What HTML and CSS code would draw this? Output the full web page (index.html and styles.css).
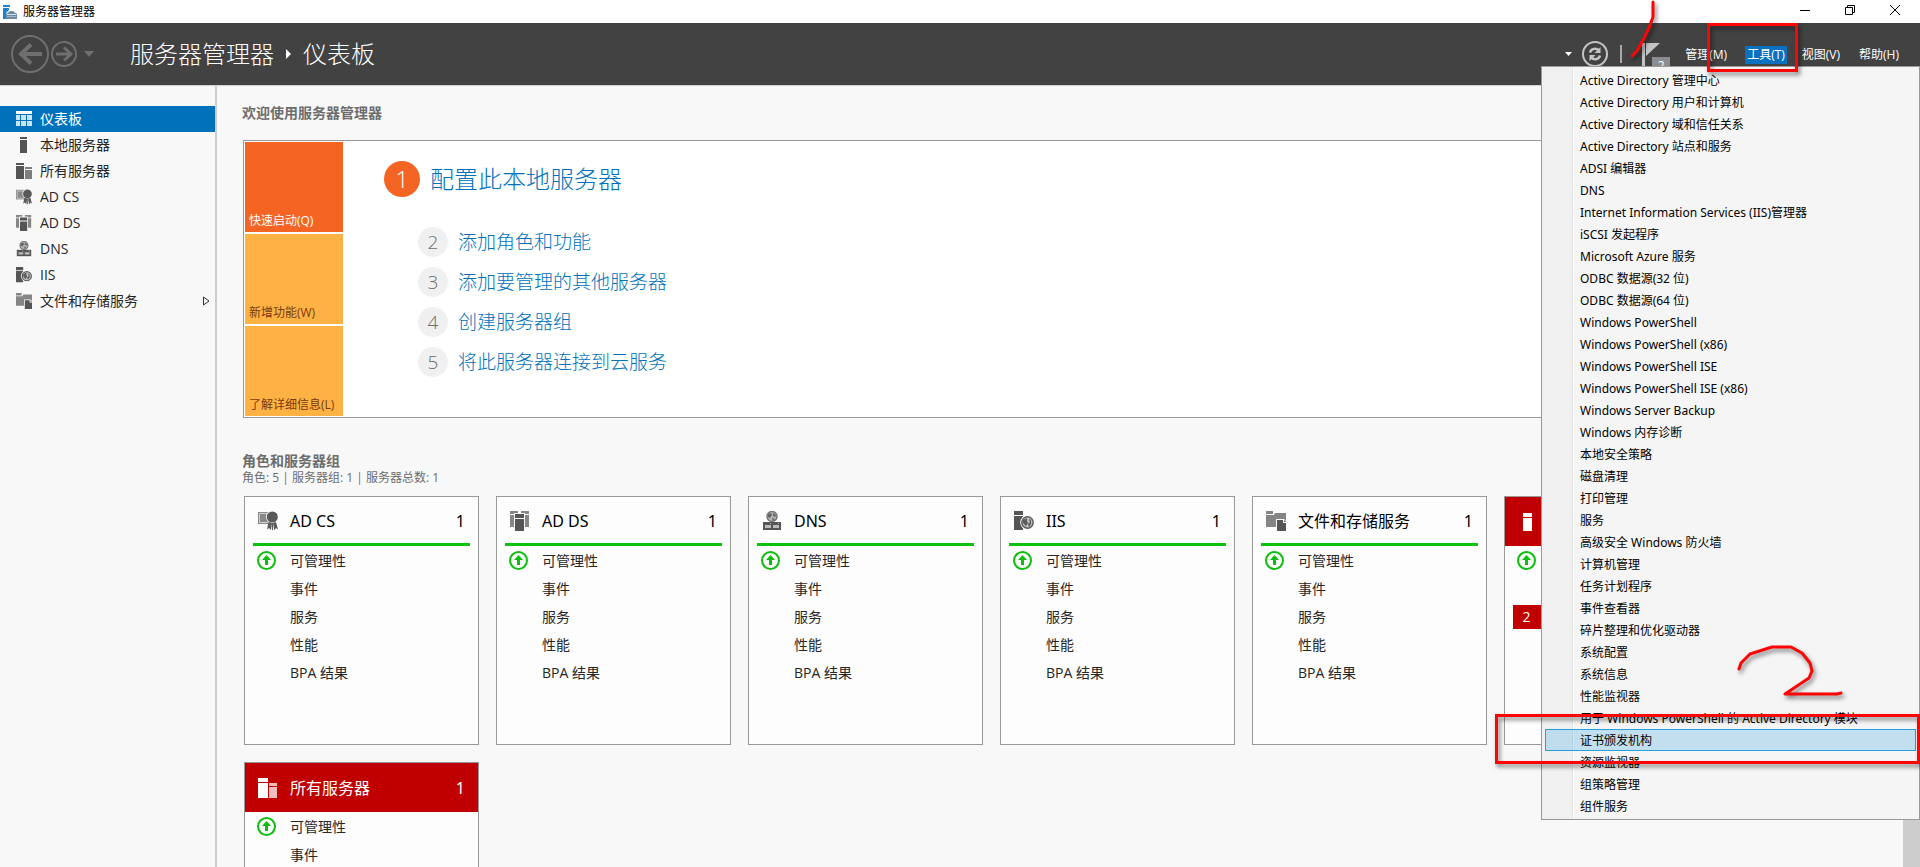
FILE: index.html
```html
<!DOCTYPE html>
<html lang="zh-CN">
<head>
<meta charset="utf-8">
<title>服务器管理器</title>
<link rel="stylesheet" href="styles.css">
</head>
<body>
<svg class="sprite" aria-hidden="true">
  <symbol id="i-dash" viewBox="0 0 16 16"><path fill="#fff" d="M0 0h16v3H0z"/><path fill="#cce3f2" d="M0 4h4v5H0zM5 4h5v5H5zM11 4h5v5h-5zM0 10h4v5H0zM5 10h5v5H5zM11 10h5v5h-5z"/></symbol>
  <symbol id="i-local" viewBox="0 0 16 16"><path fill="currentColor" d="M4 0h7v2H4zM4 3h7v13H4z"/></symbol>
  <symbol id="i-all" viewBox="0 0 16 16"><path fill="currentColor" d="M0 0h8v2H0zM0 3h8v13H0z"/><path fill="currentColor" opacity=".75" d="M9 4h7v2H9zM9 7h7v9H9z"/></symbol>
  <symbol id="i-local-lg" viewBox="0 0 20 20"><path fill="currentColor" d="M5 1h9v4H5zM5 6h9v13H5z"/></symbol>
  <symbol id="i-all-lg" viewBox="0 0 20 20"><path fill="currentColor" d="M0 0h10v4H0zM0 5h10v15H0z"/><path fill="currentColor" opacity=".75" d="M11 5h8v3h-8zM11 9h8v11h-8z"/></symbol>
  <symbol id="i-cs" viewBox="0 0 20 20"><path fill="#8a8a8a" d="M0 1h11v12H0z"/><path fill="none" stroke="#d0d0d0" d="M1.500 2.500h10v9h-10z"/><circle cx="14.300" cy="6" r="6.300" fill="#fafafa"/><circle cx="14.300" cy="6" r="5.500" fill="#595959"/><path fill="#595959" d="m10.500 11 3.500 1-1 7-2-2-2 1.500zM15 12l3-1 2 7.500-2-1.500-1.700 2.500zM14 12h1v7h-1z"/></symbol>
  <symbol id="i-ds" viewBox="0 0 20 20"><path fill="#868686" d="M0 0h8v3H0zM0 4h4v12H0zM11 0h8v3h-8zM15 4h4v12h-4z"/><path fill="#f9f9f9" d="M4 2h11v18H4z"/><path fill="#555" d="M5 3h9v4H5zM5 8h9v12H5z"/></symbol>
  <symbol id="i-dns" viewBox="0 0 20 20"><circle cx="10" cy="5.500" r="5" fill="#b5b5b5" stroke="#777" stroke-width="1.500"/><path fill="#666" d="m6 3 3-1 1 2-2 3-2-1zM11 2l3 2-1 2-2-1zM10 7l3 1-2 2z"/><path fill="#555" d="M1 11h18v8H1z"/><path fill="#bbb" d="M3 14h6v3H3zM11 14h6v3h-6zM8 12h1v1H8zM16 12h1v1h-1z"/></symbol>
  <symbol id="i-iis" viewBox="0 0 20 20"><path fill="#555" d="M0 0h9v4H0zM0 5h9v14H0z"/><circle cx="13.500" cy="11.500" r="7.300" fill="#fafafa"/><circle cx="13.500" cy="11.500" r="5.700" fill="#bdbdbd" stroke="#5c5c5c" stroke-width="1.500"/><path fill="#5c5c5c" d="m9 9 4-2v3l1 2-2 3-3-3zM15 8l2 1v4l-2 3-1-3 2-2z"/></symbol>
  <symbol id="i-file" viewBox="0 0 20 20"><path fill="#858585" d="M0 0h7v3H0zM0 4h8l1-2h11v14H0z"/><path fill="#fafafa" d="M10 8h8l2 2v10H10z"/><path fill="#555" d="M11 9h6v3h3v8h-9zM18 9l2 2h-2z"/></symbol>
  <symbol id="i-up" viewBox="0 0 19 19"><circle cx="9.500" cy="9.500" r="8.500" fill="none" stroke="#0fbd0f" stroke-width="2"/><path fill="#0fbd0f" d="M9.500 4 14 9h-3v5H8V9H5z"/></symbol>
</svg>

<header class="titlebar">
  <svg class="app-icon" viewBox="0 0 14 14"><path fill="#1c82cf" d="M0 0h7v2H0zM0 3h6v2L3 8v6H0z"/><path fill="none" stroke="#7895aa" d="M6.500 8V6.500h4V8"/><path fill="#6a8ca5" d="m3 9 3-2h5l3 2v5H3z"/><path fill="#d7e2ea" d="M4 9h9v1H4zM4 11h9v.500H4z"/></svg>
  <span class="window-title">服务器管理器</span>
  <div class="window-buttons">
    <button aria-label="最小化"><svg viewBox="0 0 10 10"><path d="M0 5.500h10"/></svg></button>
    <button aria-label="还原"><svg viewBox="0 0 10 10"><path d="M.500 2.500h7v7h-7zM2.500 2V.500h7v7H8"/></svg></button>
    <button aria-label="关闭"><svg viewBox="0 0 10 10"><path d="m0 0 10 10M10 0 0 10"/></svg></button>
  </div>
</header>

<div class="banner">
  <div class="history">
    <button class="back" aria-label="后退"><svg viewBox="0 0 38 38"><circle cx="19" cy="19" r="18" stroke-width="2"/><path stroke-width="4" d="M31 19H9M20 9.500 10 19l10 9.500"/></svg></button>
    <button class="forward" aria-label="前进"><svg viewBox="0 0 26 26"><circle cx="13" cy="13" r="12" stroke-width="2"/><path stroke-width="3" d="M5 13h14M13 6.500l7 6.500-7 6.500"/></svg></button>
    <button class="recent" aria-label="历史记录"><svg viewBox="0 0 10 6"><path class="solid" d="M0 0h10L5 6z"/></svg></button>
  </div>
  <div class="crumbs"><span>服务器管理器</span><svg class="crumb-arrow" viewBox="0 0 5 10"><path fill="#fff" d="m0 0 5 5-5 5z"/></svg><span>仪表板</span></div>
  <div class="tools">
    <svg class="caret" viewBox="0 0 8 4"><path fill="#fff" d="M0 0h7L3.500 4z"/></svg>
    <button class="refresh" aria-label="刷新"><svg viewBox="0 0 26 26"><circle cx="13" cy="13" r="12" stroke-width="2"/><path stroke-width="2.500" d="M8 11.500c1-4 6-5 9-2M18 14.500c-1 4-6 5-9 2"/><path class="solid" d="M18.500 6v6h-6zM7.500 20v-6h6z"/></svg></button>
    <span class="divider"></span>
    <button class="flag" aria-label="通知 2"><svg viewBox="0 0 18 23"><path fill="#c4c4c4" d="M0 0h3v23H0zM4 0h14L4 13z"/></svg><span class="flag-count">2</span></button>
  </div>
  <nav class="menubar">
    <button>管理(M)</button><button class="open">工具(T)</button><button>视图(V)</button><button>帮助(H)</button>
  </nav>
  <div class="dropdown" role="menu">
    <button role="menuitem">Active Directory 管理中心</button>
    <button role="menuitem">Active Directory 用户和计算机</button>
    <button role="menuitem">Active Directory 域和信任关系</button>
    <button role="menuitem">Active Directory 站点和服务</button>
    <button role="menuitem">ADSI 编辑器</button>
    <button role="menuitem">DNS</button>
    <button role="menuitem">Internet Information Services (IIS)管理器</button>
    <button role="menuitem">iSCSI 发起程序</button>
    <button role="menuitem">Microsoft Azure 服务</button>
    <button role="menuitem">ODBC 数据源(32 位)</button>
    <button role="menuitem">ODBC 数据源(64 位)</button>
    <button role="menuitem">Windows PowerShell</button>
    <button role="menuitem">Windows PowerShell (x86)</button>
    <button role="menuitem">Windows PowerShell ISE</button>
    <button role="menuitem">Windows PowerShell ISE (x86)</button>
    <button role="menuitem">Windows Server Backup</button>
    <button role="menuitem">Windows 内存诊断</button>
    <button role="menuitem">本地安全策略</button>
    <button role="menuitem">磁盘清理</button>
    <button role="menuitem">打印管理</button>
    <button role="menuitem">服务</button>
    <button role="menuitem">高级安全 Windows 防火墙</button>
    <button role="menuitem">计算机管理</button>
    <button role="menuitem">任务计划程序</button>
    <button role="menuitem">事件查看器</button>
    <button role="menuitem">碎片整理和优化驱动器</button>
    <button role="menuitem">系统配置</button>
    <button role="menuitem">系统信息</button>
    <button role="menuitem">性能监视器</button>
    <button role="menuitem">用于 Windows PowerShell 的 Active Directory 模块</button>
    <button role="menuitem" class="hover">证书颁发机构</button>
    <button role="menuitem">资源监视器</button>
    <button role="menuitem">组策略管理</button>
    <button role="menuitem">组件服务</button>
  </div>
</div>

<div class="body">
  <nav class="sidebar">
    <a href="#" class="current"><svg><use href="#i-dash"/></svg>仪表板</a>
    <a href="#"><svg><use href="#i-local"/></svg>本地服务器</a>
    <a href="#"><svg><use href="#i-all"/></svg>所有服务器</a>
    <a href="#"><svg><use href="#i-cs"/></svg>AD CS</a>
    <a href="#"><svg><use href="#i-ds"/></svg>AD DS</a>
    <a href="#"><svg><use href="#i-dns"/></svg>DNS</a>
    <a href="#"><svg><use href="#i-iis"/></svg>IIS</a>
    <a href="#"><svg><use href="#i-file"/></svg>文件和存储服务<svg class="expand" viewBox="0 0 7 10"><path d="M.500 1v8L6 5z" fill="none" stroke="#333"/></svg></a>
  </nav>

  <main class="content">
    <h1>欢迎使用服务器管理器</h1>
    <section class="welcome">
      <div class="tiles">
        <button class="tile active">快速启动(Q)</button>
        <button class="tile">新增功能(W)</button>
        <button class="tile">了解详细信息(L)</button>
      </div>
      <ol class="steps">
        <li class="main-step"><span class="num">1</span><a href="#">配置此本地服务器</a></li>
        <li><span class="num">2</span><a href="#">添加角色和功能</a></li>
        <li><span class="num">3</span><a href="#">添加要管理的其他服务器</a></li>
        <li><span class="num">4</span><a href="#">创建服务器组</a></li>
        <li><span class="num">5</span><a href="#">将此服务器连接到云服务</a></li>
      </ol>
    </section>

    <h2>角色和服务器组</h2>
    <p class="summary">角色: 5 | 服务器组: 1 | 服务器总数: 1</p>
    <div class="cards">
      <article class="card">
        <header><svg><use href="#i-cs"/></svg><h3>AD CS</h3><span>1</span></header>
        <ul><li><svg><use href="#i-up"/></svg>可管理性</li><li>事件</li><li>服务</li><li>性能</li><li>BPA 结果</li></ul>
      </article>
      <article class="card">
        <header><svg><use href="#i-ds"/></svg><h3>AD DS</h3><span>1</span></header>
        <ul><li><svg><use href="#i-up"/></svg>可管理性</li><li>事件</li><li>服务</li><li>性能</li><li>BPA 结果</li></ul>
      </article>
      <article class="card">
        <header><svg><use href="#i-dns"/></svg><h3>DNS</h3><span>1</span></header>
        <ul><li><svg><use href="#i-up"/></svg>可管理性</li><li>事件</li><li>服务</li><li>性能</li><li>BPA 结果</li></ul>
      </article>
      <article class="card">
        <header><svg><use href="#i-iis"/></svg><h3>IIS</h3><span>1</span></header>
        <ul><li><svg><use href="#i-up"/></svg>可管理性</li><li>事件</li><li>服务</li><li>性能</li><li>BPA 结果</li></ul>
      </article>
      <article class="card">
        <header><svg><use href="#i-file"/></svg><h3>文件和存储服务</h3><span>1</span></header>
        <ul><li><svg><use href="#i-up"/></svg>可管理性</li><li>事件</li><li>服务</li><li>性能</li><li>BPA 结果</li></ul>
      </article>
      <article class="card error">
        <header><svg><use href="#i-local-lg"/></svg></header>
        <ul><li><svg><use href="#i-up"/></svg></li><li></li><li class="alert"><b>2</b></li></ul>
      </article>
      <article class="card error">
        <header><svg><use href="#i-all-lg"/></svg><h3>所有服务器</h3><span>1</span></header>
        <ul><li><svg><use href="#i-up"/></svg>可管理性</li><li>事件</li></ul>
      </article>
    </div>
  </main>
  <div class="scrollbar"></div>
</div>

<svg class="marks" viewBox="0 0 440 780" aria-hidden="true">
  <g fill="none" stroke="#fb0505" stroke-width="3" stroke-linecap="round" stroke-linejoin="round">
    <path d="M173 2v15l-4 11-6 12-6 11-5 5"/>
    <path d="m259 669 2-6 9-9 22-7h19l11 6 8 10 2 8-3 7-24 16h52l4-1"/>
    <path stroke-linecap="butt" stroke-linejoin="miter" d="M228.500 24.500h88v46h-88zM16.500 715.500h422v47h-422z"/>
  </g>
</svg>
</body>
</html>
```
FILE: styles.css
```css
* { box-sizing: border-box; }

body {
  margin: 0;
  height: 100vh;
  overflow: hidden;
  display: flex;
  flex-direction: column;
  position: relative;
  background: #f8f8f8;
  color: #262626;
  font: 14px/20px "Open Sans", "Noto Sans CJK SC", sans-serif;
}

button {
  margin: 0;
  padding: 0;
  border: 0;
  background: none;
  color: inherit;
  font: inherit;
  text-align: left;
  white-space: nowrap;
}

a { color: inherit; text-decoration: none; }
svg { display: block; flex: none; }
h1, h2, h3, p, ul, ol { margin: 0; padding: 0; list-style: none; }
.sprite { position: absolute; width: 0; height: 0; }

/* Title bar */
.titlebar {
  flex: none;
  display: flex;
  align-items: center;
  height: 23px;
  padding: 0 20px 0 3px;
  background: #fff;
  color: #000;
  font-size: 12px;
}
.app-icon { width: 14px; height: 14px; margin-right: 6px; }
.window-buttons { display: flex; gap: 35px; margin-left: auto; padding-bottom: 3px; }
.window-buttons svg { width: 10px; height: 10px; overflow: visible; fill: none; stroke: #000; }

/* Banner */
.banner {
  flex: none;
  position: relative;
  z-index: 2;
  display: flex;
  align-items: center;
  height: 63px;
  padding: 0 20px 0 11px;
  background: #424242;
  border-bottom: 1px solid #d2d2d2;
  color: #fff;
}
.history { display: flex; align-items: center; gap: 2px; }
.history svg, .refresh svg { fill: none; stroke: #6f6f6f; }
.back svg { width: 38px; height: 38px; }
.forward svg { width: 26px; height: 26px; }
.recent { margin-left: 5px; }
.recent svg { width: 10px; height: 6px; }
.history .solid { fill: #6f6f6f; stroke: none; }
.crumbs {
  display: flex;
  align-items: center;
  gap: 12px;
  margin-left: 36px;
  font-size: 24px;
  font-weight: 300;
  line-height: 32px;
}
.crumb-arrow { width: 5px; height: 10px; }
.tools { display: flex; align-items: center; margin-left: auto; }
.caret { width: 8px; height: 4px; margin-right: 9px; }
.refresh svg { width: 26px; height: 26px; stroke: #c4c4c4; }
.refresh .solid { fill: #c4c4c4; stroke: none; }
.divider { width: 2px; height: 18px; margin: 0 20px 0 12px; background: #a8a8a8; }
.flag { position: relative; width: 28px; }
.flag svg { width: 18px; height: 23px; }
.flag-count {
  position: absolute;
  left: 10px;
  top: 14px;
  width: 18px;
  background: #8c8c90;
  font-size: 12px;
  line-height: 18px;
  text-align: center;
}
.menubar { display: flex; gap: 14px; margin: 2px 0 0 14px; font-size: 12px; line-height: 18px; }
.menubar button { padding: 0 1px; }
.menubar button:nth-child(odd) { margin-right: 3px; }
.menubar .open { padding: 0 2px; background: #0a70c0; }

.dropdown {
  position: absolute;
  top: 43px;
  right: 0;
  width: 379px;
  padding: 2px 3px;
  border: 1px solid #999;
  background: linear-gradient(90deg, #f0f0f0 30px, #e2e2e2 30px 31px, #fff 31px 32px, #f5f5f5 32px);
  color: #000;
  font-family: "Noto Sans", "Noto Sans CJK SC", sans-serif;
  font-size: 12px;
}
.dropdown button {
  display: block;
  width: 100%;
  padding: 2px 34px 0;
  border: 1px solid transparent;
  line-height: 18px;
}
.dropdown .hover { border-color: #26a0da; background: rgba(38, 160, 218, .25); }

/* Sidebar */
.body { flex: 1; min-height: 0; display: flex; }
.sidebar {
  flex: none;
  width: 217px;
  padding-top: 20px;
  border-right: 2px solid #cdcdcd;
}
.sidebar a {
  display: flex;
  align-items: center;
  gap: 8px;
  height: 26px;
  padding: 0 5px 0 16px;
}
.sidebar svg { width: 16px; height: 16px; color: #555; }
.sidebar .current { background: #0072bc; color: #fff; }
.sidebar .expand { width: 7px; height: 10px; margin-left: auto; }

/* Content */
.content {
  flex: 1;
  min-width: 0;
  overflow: hidden;
  padding: 17px 20px 0 25px;
}
h1, h2 { color: #6d6d6d; font-size: 14px; line-height: 20px; font-weight: 700; }
.welcome {
  display: flex;
  margin: 17px 0 33px 1px;
  padding: 1px;
  border: 1px solid #999;
  background: #fff;
}
.tiles { display: flex; flex-direction: column; gap: 2px; width: 98px; }
.tile {
  display: flex;
  align-items: flex-end;
  height: 90px;
  padding: 0 4px 2px;
  background: #ffb244;
  color: #7a3a10;
  font-size: 12px;
  line-height: 18px;
}
.tile.active { background: #f46524; color: #fff; }
.steps { padding: 19px 0 0 41px; color: #0072bc; font-weight: 300; }
.steps li {
  display: flex;
  align-items: center;
  gap: 10px;
  height: 30px;
  margin-bottom: 10px;
  font-size: 19px;
}
.steps .main-step { height: 36px; margin-bottom: 30px; font-size: 24px; }
.num {
  width: 30px;
  border-radius: 50%;
  background: #f0f0f0;
  color: #6d6d6d;
  line-height: 30px;
  text-align: center;
}
.main-step .num { width: 36px; background: #f46524; color: #fff; line-height: 36px; }
.steps li:not(.main-step) { padding-left: 34px; }

.summary { margin-bottom: 11px; color: #6d6d6d; font-size: 12px; line-height: 14px; }
.cards {
  display: grid;
  grid-template-columns: repeat(auto-fill, 235px);
  gap: 17px;
  margin-left: 2px;
}
.card { min-height: 249px; border: 1px solid #999; background: #fdfdfd; }
.card header {
  display: flex;
  align-items: center;
  gap: 12px;
  height: 49px;
  margin: 0 8px;
  padding: 2px 5px 0;
  border-bottom: 3px solid #0cc20c;
  color: #000;
  font-family: "Noto Sans", "Noto Sans CJK SC", sans-serif;
  font-size: 16px;
}
.card header svg { width: 20px; height: 20px; }
.card h3 { flex: 1; font-size: 16px; font-weight: 400; }
.card ul { padding-top: 1px; }
.card li { position: relative; height: 28px; padding-left: 45px; line-height: 28px; }
.card li svg { position: absolute; left: 12px; top: 4px; width: 19px; height: 19px; }
.card.error header { margin: 0; padding: 0 13px; border: 0; background: #c00000; color: #fff; }
.card .alert {
  height: 24px;
  margin: 2px 8px;
  padding-left: 4px;
  background: #c00000;
  color: #fff;
  line-height: 24px;
}
.alert b { display: block; width: 19px; font-weight: 400; text-align: center; }

.scrollbar { flex: none; width: 17px; background: #cdcdcd; }

/* Hand-drawn annotation layer */
.marks {
  position: absolute;
  top: 0;
  right: 0;
  z-index: 3;
  width: 440px;
  height: 780px;
  pointer-events: none;
  filter: drop-shadow(2px 3px 2px rgba(0, 0, 0, .5));
}
```
